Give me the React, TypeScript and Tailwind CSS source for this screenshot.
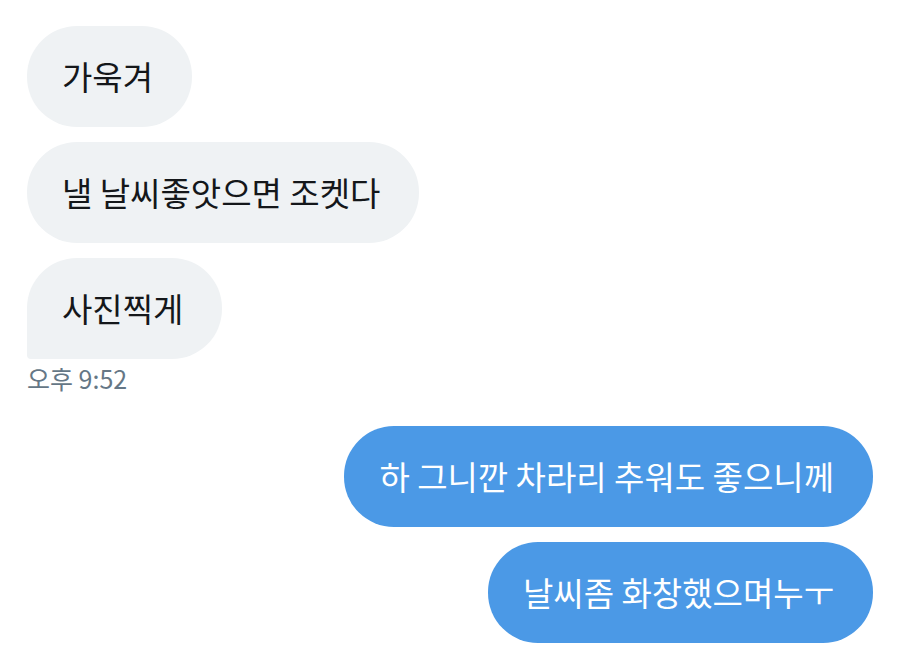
import React from "react";

const font = { fontFamily: '"Noto Sans CJK KR", "Noto Sans", sans-serif' };

function Left({ text, last }: { text: string; last?: boolean }) {
  return (
    <div
      className={`flex h-[101px] items-center self-start bg-[#eff2f4] pl-[35px] pr-[39px] text-[33px] leading-none text-[#14171a] ${
        last ? "rounded-[50px] rounded-bl-[4px]" : "rounded-[50px]"
      }`}
    >
      {text}
    </div>
  );
}

function Right({ text }: { text: string }) {
  return (
    <div className="flex h-[101px] items-center self-end rounded-[50px] bg-[#4b99e6] pl-[35px] pr-[39px] text-[33px] leading-none text-white">
      {text}
    </div>
  );
}

export default function App() {
  return (
    <div className="h-[652px] w-[900px] overflow-hidden bg-white" style={font}>
      <div className="flex flex-col px-[27px] pt-[26px]">
        <div className="flex flex-col gap-[15px]">
          <Left text="가욱겨" />
          <Left text="낼 날씨좋앗으면 조켓다" />
          <Left text="사진찍게" last />
        </div>
        <div className="mt-[5px] text-[25px] leading-[28px] text-[#657786]">오후 9:52</div>
        <div className="mt-[34px] flex flex-col gap-[15px]">
          <Right text="하 그니깐 차라리 추워도 좋으니께" />
          <Right text="날씨좀 화창했으며누ㅜ" />
        </div>
      </div>
    </div>
  );
}
